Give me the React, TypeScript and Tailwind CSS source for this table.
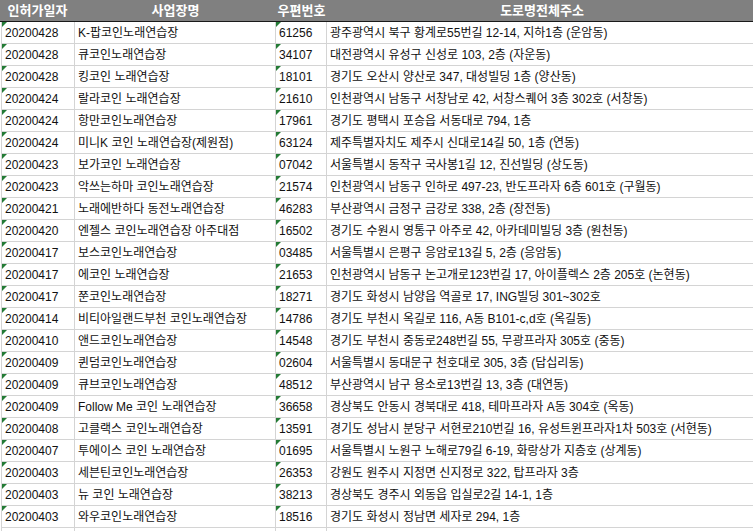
import React from "react";

type Row = [string, string, string, string];

const rows: Row[] = [
  ["20200428", "K-팝코인노래연습장", "61256", "광주광역시 북구 황계로55번길 12-14, 지하1층 (운암동)"],
  ["20200428", "큐코인노래연습장", "34107", "대전광역시 유성구 신성로 103, 2층 (자운동)"],
  ["20200428", "킹코인 노래연습장", "18101", "경기도 오산시 양산로 347, 대성빌딩 1층 (양산동)"],
  ["20200424", "랄라코인 노래연습장", "21610", "인천광역시 남동구 서창남로 42, 서창스퀘어 3층 302호 (서창동)"],
  ["20200424", "항만코인노래연습장", "17961", "경기도 평택시 포승읍 서동대로 794, 1층"],
  ["20200424", "미니K 코인 노래연습장(제원점)", "63124", "제주특별자치도 제주시 신대로14길 50, 1층 (연동)"],
  ["20200423", "보가코인 노래연습장", "07042", "서울특별시 동작구 국사봉1길 12, 진선빌딩 (상도동)"],
  ["20200423", "악쓰는하마 코인노래연습장", "21574", "인천광역시 남동구 인하로 497-23, 반도프라자 6층 601호 (구월동)"],
  ["20200421", "노래에반하다 동전노래연습장", "46283", "부산광역시 금정구 금강로 338, 2층 (장전동)"],
  ["20200420", "엔젤스 코인노래연습장 아주대점", "16502", "경기도 수원시 영통구 아주로 42, 아카데미빌딩 3층 (원천동)"],
  ["20200417", "보스코인노래연습장", "03485", "서울특별시 은평구 응암로13길 5, 2층 (응암동)"],
  ["20200417", "에코인 노래연습장", "21653", "인천광역시 남동구 논고개로123번길 17, 아이플렉스 2층 205호 (논현동)"],
  ["20200417", "쭌코인노래연습장", "18271", "경기도 화성시 남양읍 역골로 17, ING빌딩 301~302호"],
  ["20200414", "비티아일랜드부천 코인노래연습장", "14786", "경기도 부천시 옥길로 116, A동 B101-c,d호 (옥길동)"],
  ["20200410", "앤드코인노래연습장", "14548", "경기도 부천시 중동로248번길 55, 무광프라자 305호 (중동)"],
  ["20200409", "퀸덤코인노래연습장", "02604", "서울특별시 동대문구 천호대로 305, 3층 (답십리동)"],
  ["20200409", "큐브코인노래연습장", "48512", "부산광역시 남구 용소로13번길 13, 3층 (대연동)"],
  ["20200409", "Follow Me 코인 노래연습장", "36658", "경상북도 안동시 경북대로 418, 테마프라자 A동 304호 (옥동)"],
  ["20200408", "고클랙스 코인노래연습장", "13591", "경기도 성남시 분당구 서현로210번길 16, 유성트윈프라자1차 503호 (서현동)"],
  ["20200407", "투에이스 코인 노래연습장", "01695", "서울특별시 노원구 노해로79길 6-19, 화랑상가 지층호 (상계동)"],
  ["20200403", "세븐틴코인노래연습장", "26353", "강원도 원주시 지정면 신지정로 322, 탑프라자 3층"],
  ["20200403", "뉴 코인 노래연습장", "38213", "경상북도 경주시 외동읍 입실로2길 14-1, 1층"],
  ["20200403", "와우코인노래연습장", "18516", "경기도 화성시 정남면 세자로 294, 1층"],
];

const headers = ["인허가일자", "사업장명", "우편번호", "도로명전체주소"];

// stored-as-text marker in the top-left corner of a cell
function Flag() {
  return (
    <span className="absolute left-0 top-0 w-0 h-0 border-t-[5px] border-r-[5px] border-t-[#237b35] border-r-transparent" />
  );
}

function Cell({ text, flag, className }: { text: string; flag?: boolean; className: string }) {
  return (
    <div className={`relative h-[22px] border-b border-r border-[#d4d4d4] pl-[3px] pt-[3px] whitespace-nowrap ${className}`}>
      {flag && <Flag />}
      {text}
    </div>
  );
}

export default function App() {
  return (
    <div
      className="w-[753px] h-[531px] overflow-hidden bg-white text-[12px] leading-[16px] text-[#111]"
      style={{ fontFamily: '"Liberation Sans", "Noto Sans CJK KR", sans-serif' }}
    >
      <div className="flex w-[760px] h-[22px] bg-[#808080] border-b border-[#1a1a1a] text-white text-[13px] font-bold leading-[21px]">
        <div className="w-[75px] text-center">{headers[0]}</div>
        <div className="w-[201px] text-center">{headers[1]}</div>
        <div className="w-[51px] text-center">{headers[2]}</div>
        <div className="w-[430px] text-center">{headers[3]}</div>
      </div>

      <div className="pl-[1px]">
        {[...rows, ["", "", "", ""] as Row].map((r, i) => (
          <div key={i} className="flex w-[760px]">
            <Cell text={r[0]} flag={!!r[0]} className="w-[74px] border-l" />
            <Cell text={r[1]} className="w-[201px]" />
            <Cell text={r[2]} flag={!!r[2]} className="w-[51px]" />
            <Cell text={r[3]} className="w-[430px]" />
          </div>
        ))}
      </div>
    </div>
  );
}
